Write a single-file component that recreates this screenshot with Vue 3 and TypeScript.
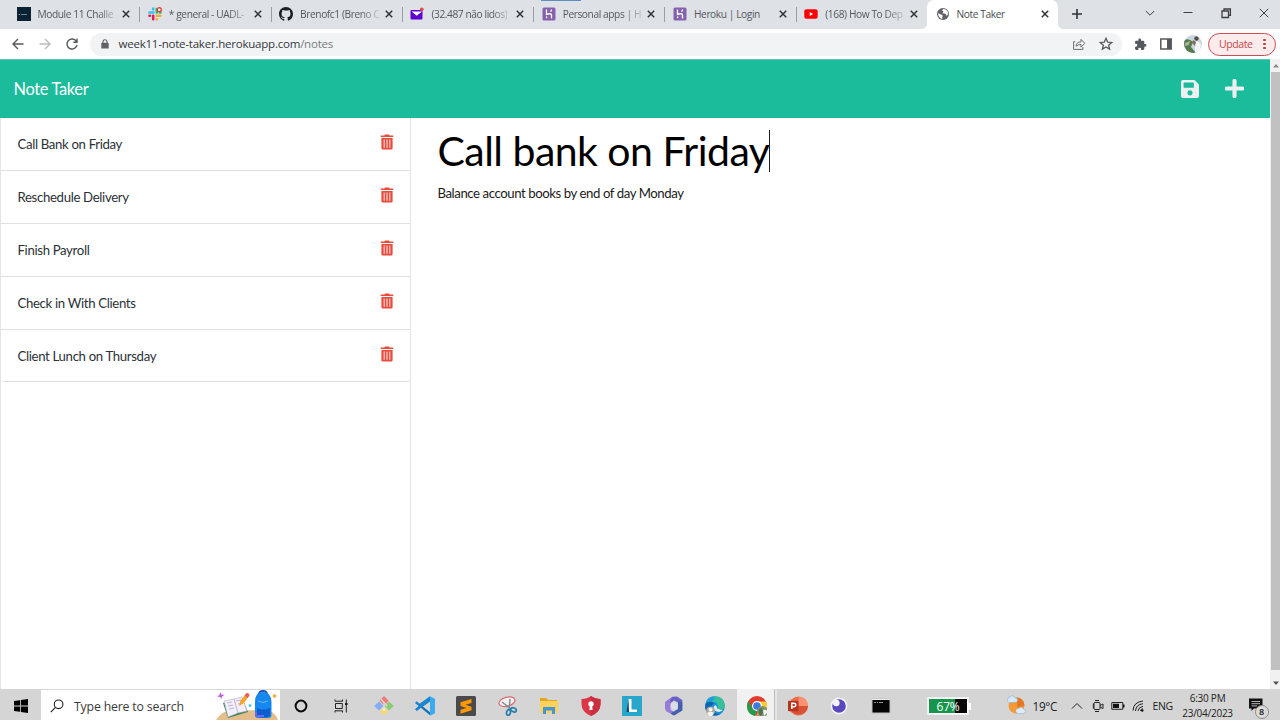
<script setup lang="ts">
import { ref } from 'vue'

interface Tab { icon: string; title: string }

const tabs: Tab[] = [
  { icon: 'module', title: 'Module 11 Challe' },
  { icon: 'slack', title: '* general - UADL-' },
  { icon: 'github', title: 'Brenofc1 (Breno C' },
  { icon: 'mail', title: '(32.487 não lidos)' },
  { icon: 'heroku', title: 'Personal apps | H' },
  { icon: 'heroku', title: 'Heroku | Login' },
  { icon: 'youtube', title: '(168) How To Dep' },
  { icon: 'globe', title: 'Note Taker' },
]
const activeTab = ref(7)

const notes = ref<string[]>([
  'Call Bank on Friday',
  'Reschedule Delivery',
  'Finish Payroll',
  'Check in With Clients',
  'Client Lunch on Thursday',
])
const noteTitle = ref('Call bank on Friday')
const noteText = ref('Balance account books by end of day Monday')

const apps: string[] = ['cortana', 'taskview', 'git', 'vscode', 'sublime', 'snip', 'folder', 'shield', 'lapp', 'office', 'edge', 'chrome', 'ppt', 'insomnia', 'cmd']
</script>

<template>
  <div class="screen">
    <div class="tabstrip">
      <span class="strip-mark"></span>
      <div v-for="(tab, i) in tabs" :key="i" class="tab" :class="{ active: i === activeTab, nosep: i === 6, full: i === 5 || i === 7 }">
        <svg class="fav" viewBox="0 0 14 14">
          <g v-if="tab.icon === 'module'"><rect width="14" height="14" fill="#0b2233" /><path d="M1.500 7.500h1.500M4 7.500h6" stroke="#6d8796" stroke-width="1.200" /></g>
          <g v-else-if="tab.icon === 'slack'" stroke-width="2.6" stroke-linecap="round" fill="none">
            <path d="M1.5 5.5h4M5.2 1.5v1" stroke="#36c5f0" /><path d="M8.8 2v3.5M12 5.5h.5" stroke="#2eb67d" />
            <path d="M5.2 8.8v3.5M1.5 8.8h.5" stroke="#e01e5a" /><path d="M8.8 8.8h3.5M8.8 12.3v.2" stroke="#ecb22e" />
            <circle cx="11.3" cy="2.7" r="2" fill="#fff" stroke="#e0433b" stroke-width="1.4" />
          </g>
          <path v-else-if="tab.icon === 'github'" fill="#1b1f23" transform="scale(.875)" d="M8 0C3.58 0 0 3.58 0 8c0 3.54 2.29 6.53 5.47 7.59.4.07.55-.17.55-.38v-1.49c-2.01.37-2.53-.49-2.69-.94-.09-.23-.48-.94-.82-1.13-.28-.15-.68-.52-.01-.53.63-.01 1.08.58 1.23.82.72 1.21 1.87.87 2.33.66.07-.52.28-.87.51-1.07-1.78-.2-3.64-.89-3.64-3.95 0-.87.31-1.59.82-2.15-.08-.2-.36-1.02.08-2.12 0 0 .67-.21 2.2.82a7.6 7.6 0 0 1 4 0c1.53-1.04 2.2-.82 2.2-.82.44 1.1.16 1.92.08 2.12.51.56.82 1.27.82 2.15 0 3.07-1.87 3.75-3.65 3.95.29.25.54.73.54 1.48v2.19c0 .21.15.46.55.38A8 8 0 0 0 16 8c0-4.42-3.58-8-8-8Z" />
          <g v-else-if="tab.icon === 'mail'"><rect x=".5" y="3" width="12" height="9.5" rx="1" fill="#5f01d1" /><path d="M1.5 4.5h10.5L6.8 8.8Z" fill="#fff" /><circle cx="11.8" cy="2.2" r="1.8" fill="#e5483f" /></g>
          <g v-else-if="tab.icon === 'heroku'"><rect x=".5" y=".5" width="13" height="13" rx="1.5" fill="#8562ae" /><path d="M4.500 2.500v5c1.800-.9 5-1.300 5 .5v3.500M9.500 2.500q0 1.300-1 2.200" stroke="#fff" stroke-width="1.300" fill="none" /><path d="M4 9l1.700 1.300L4 11.600Z" fill="#fff" /></g>
          <g v-else-if="tab.icon === 'youtube'"><rect x=".3" y="2.3" width="13.4" height="9.4" rx="2" fill="#f00" /><path d="M5.7 5v4l3.5-2Z" fill="#fff" /></g>
          <g v-else><circle cx="7" cy="7" r="6" fill="#5f6368" /><path d="M7.5 1.8 6 3.5l1.5 1-1 1.8 3 .5 1.3 2.2 1.4-2.2Q12 3 7.500 1.800ZM2 6.200l3 1.300 2 1.200-.8 1.100.2 2.200Q2 11 2 6.200Z" fill="#fff" /></g>
        </svg>
        <span class="tab-title">{{ tab.title }}</span>
        <svg class="close" viewBox="0 0 8 8"><path d="m.8.8 6.4 6.4M7.2.8.8 7.2" stroke="#303236" stroke-width="1.5" /></svg>
      </div>
      <svg class="newtab" viewBox="0 0 12 12"><path d="M6 1v10M1 6h10" stroke="#303236" stroke-width="1.6" /></svg>
      <div class="winctl">
        <svg viewBox="0 0 12 12"><path d="m1.8 4 4.2 4.2L10.2 4" /></svg>
        <svg viewBox="0 0 12 12"><path d="M1.5 5.500h9" /></svg>
        <svg viewBox="0 0 12 12"><path d="M2 4h6.5v6.5H2ZM4 3.8V2h6.4v6.4H8.6" stroke-width="1.3" /></svg>
        <svg viewBox="0 0 12 12"><path d="m1.8 1.8 8.4 8.4M10.2 1.8l-8.4 8.4" /></svg>
      </div>
    </div>

    <div class="toolbar">
      <svg class="nav" viewBox="0 0 12 12"><path d="M11.5 6H1.3M6 1 1 6l5 5" stroke="#55595e" /></svg>
      <svg class="nav" viewBox="0 0 12 12"><path d="M.5 6h10.2M6 1l5 5-5 5" stroke="#b9bcc0" /></svg>
      <svg class="nav" viewBox="0 0 12 12"><path d="M10.3 3.4A5 5 0 1 0 11 6.8M11 .6v3.7H7.3" stroke="#55595e" /></svg>
      <div class="omnibox">
        <svg class="lock" viewBox="0 0 8 10"><rect x=".3" y="3.8" width="7.4" height="5.8" rx=".7" fill="#5f6368" /><path d="M2 4V2.7a2 2 0 0 1 4 0V4" fill="none" stroke="#5f6368" stroke-width="1.1" /></svg>
        <span class="url">week11-note-taker.herokuapp.com<em>/notes</em></span>
        <svg class="share" viewBox="0 0 14 14"><path d="M3.2 4.7H1.6v7.7h9.3V10M4 9.2q.4-4.2 5-4.4V2.4l3.8 3.9-3.8 3.8V7.5Q6 7.4 4 9.2Z" fill="none" stroke="#6a6e73" /></svg>
        <svg class="star" viewBox="0 0 14 14"><path d="m7 1.3 1.65 3.75 4.1.4-3.1 2.7.95 4L7 10l-3.6 2.15.95-4-3.1-2.7 4.1-.4Z" fill="none" stroke="#55595e" stroke-width="1.3" /></svg>
      </div>
      <svg class="tool puzzle" viewBox="0 0 24 24"><path fill="#55595e" d="M20.5 11H19V7a2 2 0 0 0-2-2h-4V3.500a2.500 2.500 0 0 0-5 0V5H4a2 2 0 0 0-2 2v3.800h1.500a2.700 2.700 0 0 1 0 5.400H2V20a2 2 0 0 0 2 2h3.800v-1.500a2.700 2.700 0 0 1 5.400 0V22H17a2 2 0 0 0 2-2v-4h1.500a2.500 2.500 0 0 0 0-5Z" /></svg>
      <svg class="tool panel" viewBox="0 0 12 12"><path d="M.8 1h10.4v10H.8Z" fill="none" stroke="#55595e" stroke-width="1.5" /><path d="M7 1h4v10H7Z" fill="#55595e" /></svg>
      <svg class="avatar" viewBox="0 0 18 18"><clipPath id="av"><circle cx="9" cy="9" r="9" /></clipPath><g clip-path="url(#av)"><path d="M0 0h18v18H0Z" fill="#c6d8df" /><path d="M0 5q5-2 9 2l-2 5 5 6H0Z" fill="#567a4d" /><path d="M1 8 6 6 5 10 1 11Z" fill="#a5b5a1" /><path d="M11 7q4-2 6 3l-2 8h-4Z" fill="#f4f4f4" /><circle cx="12.5" cy="3.500" r="2.200" fill="#594b43" /><path d="m9 5 3 2-1 4-3-3Z" fill="#856f61" /></g></svg>
      <div class="update"><span>Update</span><i></i></div>
    </div>

    <div class="viewport">
      <div class="page">
        <header class="navbar">
          <span class="brand">Note Taker</span>
          <svg class="save" viewBox="0 0 448 448"><path fill="#ecf0f1" fill-rule="evenodd" d="m434 98-84-84A48 48 0 0 0 316 0H48A48 48 0 0 0 0 48v352a48 48 0 0 0 48 48h352a48 48 0 0 0 48-48V132a48 48 0 0 0-14-34ZM224 384a64 64 0 1 1 0-128 64 64 0 0 1 0 128Zm96-308v104a12 12 0 0 1-12 12H76a12 12 0 0 1-12-12V76a12 12 0 0 1 12-12h232a12 12 0 0 1 12 12Z" /></svg>
          <svg class="add" viewBox="0 0 18 18"><path d="M9 1.700v14.600M1.700 9h14.600" stroke="#ecf0f1" stroke-width="3.900" stroke-linecap="round" /></svg>
        </header>
        <div class="content">
          <aside class="sidebar">
            <ul>
              <li v-for="note in notes" :key="note">
                <span>{{ note }}</span>
                <svg viewBox="0 0 14 16"><path fill="#e74c3c" d="M.7 1.500H4.300L5 .5h4l.7 1h3.600v1.500H.7ZM1.400 4h11.200v10.200q0 1.300-1.300 1.300H2.700q-1.300 0-1.300-1.300Z" /><path d="M4.200 5.600v8.200M7 5.600v8.200M9.800 5.600v8.200" stroke="#fbd9d5" stroke-width="1.100" /></svg>
              </li>
            </ul>
          </aside>
          <main class="editor">
            <div class="heading"><span>{{ noteTitle }}</span><i class="caret"></i></div>
            <p>{{ noteText }}</p>
          </main>
        </div>
      </div>
      <div class="scrollbar">
        <svg viewBox="0 0 10 12"><path d="m2 8 3-3.500L8 8Z" fill="#8b8b8b" /></svg>
        <div class="thumb"></div>
        <svg viewBox="0 0 10 12"><path d="m2 5 3 3.500L8 5Z" fill="#505050" /></svg>
      </div>
    </div>

    <footer class="taskbar">
      <div class="start"><svg viewBox="0 0 14 14"><path d="M0 2 6 1.200v5.400H0ZM6.800 1 14 0v6.600H6.800ZM0 7.400h6v5.400L0 12ZM6.800 7.400H14V14l-7.200-1Z" fill="#000" /></svg></div>
      <div class="search">
        <svg class="lens" viewBox="0 0 14 14"><circle cx="8.600" cy="5.300" r="4.300" fill="none" stroke="#222" stroke-width="1.100" /><path d="M5.500 8.400.8 13.200" stroke="#222" stroke-width="1.200" /></svg>
        <span>Type here to search</span>
        <svg class="art" viewBox="0 0 64 30">
          <path d="M0 30q7-11 18-9l24-1q16-2 20 10Z" fill="#e4bd8c" />
          <path d="m4 2 1.500 2.500L8.500 5 6 6.500 5.500 9 4 7 1 6.500 3.500 5Z" fill="#c45fe0" />
          <path d="m7 13 19-5 6 14-20 6Z" fill="#3b8b57" /><path d="m8 11 10-2 8-2 5 14-9 2-10 4Z" fill="#f3eef9" stroke="#a9a2bd" stroke-width=".5" /><path d="m18 9 4 14M11 13l5-1M12 16l5-1M13 19l5-1M20 11l5-1M22 14l5-1" stroke="#a69ebf" stroke-width=".7" />
          <path d="m23 16 1.300-5 5.500-7 3 2.500-5.500 7Z" fill="#f6a52c" /><path d="m28.500 5.500 2-2.500q3-.2 3 2.500l-2 2.500Z" fill="#e85e59" />
          <path d="M43 5q0-4 4-4t4 4" fill="none" stroke="#1753b5" stroke-width="2" /><path d="M39 12q0-10 8-10t8.500 10v13q0 3-3 3H42q-3 0-3-3Z" fill="#1687ee" /><path d="M41 18q6 3 13 0v8q-6 3-13 0Z" fill="#0e5dcc" /><path d="M40 22v4h8" stroke="#7069ed" stroke-width="2" fill="none" /><path d="M42 11q5 3 10 0" stroke="#65baff" fill="none" />
          <circle cx="58.500" cy="6" r="1.800" fill="#f7aa29" /><circle cx="34" cy="15.500" r="1.500" fill="#58c8dc" />
        </svg>
      </div>
      <div v-for="app in apps" :key="app" class="app" :class="{ current: app === 'chrome' }">
        <svg viewBox="0 0 20 20">
          <circle v-if="app === 'cortana'" cx="10" cy="10" r="5.400" fill="none" stroke="#0c0c0c" stroke-width="2" />
          <g v-else-if="app === 'taskview'" fill="none" stroke="#222"><path d="M3 3.500v1.700h7.500V3.500M3 16.500v-1.700h7.500v1.700M3.500 7.500h6.800v5H3.500ZM14.300 3.500v13" /><path d="M13 7h2.600v2H13Z" fill="#222" stroke="none" /></g>
          <g v-else-if="app === 'git'"><path d="m10 0 4.500 4.500-2 3-2.500 2L5.500 4.500Z" fill="#ef7c77" /><path d="M5 5.500 9.500 10 5 14.500.2 10Z" fill="#84aef7" /><path d="M15 5.500 19.800 10 15 14.500 10.500 10Z" fill="#8cca76" /><path d="m10 10.500 4.500 4.500L10 19.500 5.500 15Z" fill="#f7d774" /><path d="m7 3 6 7M10 6.500V14" stroke="#ddd" stroke-width="1.200" /><circle cx="10" cy="13.500" r="1.500" fill="#eee" /></g>
          <g v-else-if="app === 'vscode'"><path d="M1.500 5.500 15 16.200v3L.2 7Z" fill="#1472b9" /><path d="M.2 13 15 .8v4.500L1.500 15Z" fill="#188bd2" /><path d="M.2 7 1.700 5.500 4.500 7.700 15 .3v5.200L1.700 14.700.2 13.300 4 10Z" fill="#1a86cf" /><path d="M15 .3 20 2.800v14.400l-5 2.500Z" fill="#3aabee" /></g>
          <g v-else-if="app === 'sublime'"><rect width="20" height="20" rx="1.500" fill="#4a4a4a" /><path d="m4.500 6.300 11-3.300v4l-6 1.700 6 2v3.500l-11 3.500v-4l6-1.800-6-1.900Z" fill="#ff9800" /></g>
          <g v-else-if="app === 'snip'"><ellipse cx="9" cy="5.700" rx="8.200" ry="4.500" transform="rotate(-15 9 5.700)" fill="#f6f1f1" stroke="#db6670" stroke-width="1.200" /><path d="m4 6 9 7M12 3l-1 11" stroke="#818c94" stroke-width="1.500" /><g fill="none" stroke="#217eaf" stroke-width="1.700"><ellipse cx="10.500" cy="16.500" rx="1.900" ry="2.800" transform="rotate(15 10.500 16.500)" /><ellipse cx="15.500" cy="13.800" rx="2.900" ry="1.900" transform="rotate(25 15.500 13.800)" /></g></g>
          <g v-else-if="app === 'folder'"><path d="M1 2h6l2 2h9v4H1Z" fill="#e8a51b" /><path d="M1 5h18v12H1Z" fill="#ffd25e" /><path d="M4 18v-7h12v7h-3v-3.500H7V18Z" fill="#4596d1" /></g>
          <g v-else-if="app === 'shield'"><path d="M10 0q4 3 9.500 3v5q0 8-9.500 12Q.5 16 .5 8V3Q6 3 10 0Z" fill="#dc3545" /><path d="M10 0q4 3 9.500 3v5q0 8-9.500 12Z" fill="#c92f40" /><circle cx="10" cy="8" r="2.700" fill="#fff" /><path d="M9 9h2l.6 5H8.400Z" fill="#fff" /></g>
          <g v-else-if="app === 'lapp'"><path d="M0 0h20v20H0Z" fill="#28a6cc" /><path d="M6.500 3 4.500 16H8Z" fill="#15435e" /><path d="M6.500 3h3v10.500H15V16H7Z" fill="#fff" /></g>
          <g v-else-if="app === 'office'"><path d="M8.500.8 13 .5l5.300 3.500v7.500L14 10V6.500L10 4.500 6.500 7v6.500L4 15.200 1.300 13V6Z" fill="#6a60c8" /><path d="M1.300 6 8.500.8Q6 3.500 6 7.500v6l4 2.300 8.300-4.300v2.700L10 19.500 1.800 15Z" fill="#9a79dd" /><path d="m14 5.500 4.300 1v8L10 19.500l-3.500-2L14 13Z" fill="#4360ac" /><path d="m10 6.500 3.300 1.800v3.500L10 13.700l-3.300-1.900V8.300Z" fill="#dcdeec" /></g>
          <g v-else-if="app === 'edge'"><circle cx="10" cy="10" r="9.800" fill="#168fd4" /><path d="M.5 8Q3 0 11 .3q8 .8 8.800 8.700 0 5-5 5-3 0-2-3 .5-5-5-5Q3 6 .5 8Z" fill="#36bf9a" /><path d="M.5 8Q2 1 8 .6q4 2-1 5.400Q3 6 .5 8Z" fill="#209fd8" /><path d="M.5 8Q4 4 9 7q-4 3-2 7t8 4Q9 21 4 18-1 14 .5 8Z" fill="#0b63b3" /><path d="M10.500 9q2 1.500 1.500 3.500l6 2-4 1.500q-5-.5-5.500-4 0-2 2-3Z" fill="#dce9f4" /><circle cx="5.500" cy="15" r="4.500" fill="#aaa59e" /><circle cx="5.500" cy="13.500" r="2" fill="#f5f1ec" /><path d="M2 17q3-3 7 0l-2 3H4Z" fill="#f5f1ec" /></g>
          <g v-else-if="app === 'chrome'"><circle cx="10" cy="10" r="10" fill="#e33b2e" /><path d="M1.300 5 6 13l4 1.500L8 20Q0 18 0 10q0-3 1.300-5Z" fill="#259b4b" /><path d="M10 5.500h9q3 7-3 12l-7 2.500 5-9Z" fill="#ffcb30" /><circle cx="10" cy="10" r="5" fill="#fff" /><circle cx="10" cy="10" r="3.800" fill="#3779e5" /><circle cx="15.500" cy="15.500" r="5.500" fill="#7d9576" /><path d="m12 13 3-1 1 4-2 4q-3-2-2-7Z" fill="#55704d" /><path d="M16 14q5-1 4 3l-3 3Z" fill="#f1f4f1" /></g>
          <g v-else-if="app === 'ppt'"><circle cx="10.500" cy="10" r="9.500" fill="#ed6c47" /><path d="M10.500.5A9.500 9.500 0 0 1 20 10h-9.500Z" fill="#ff9274" /><path d="M2 10h18a9.500 9.500 0 0 1-18 3Z" fill="#d75336" /><rect x="0" y="4.800" width="10.500" height="10.500" rx="1" fill="#b7331c" /><path d="M3.800 13V7.300h2q2 0 2 1.700t-2 1.700h-2" fill="none" stroke="#fff" stroke-width="1.500" /></g>
          <g v-else-if="app === 'insomnia'"><circle cx="10" cy="10" r="7.600" fill="#5849be" stroke="#f5f2fa" stroke-width="1.600" /><circle cx="7.300" cy="7" r="3.300" fill="#f5f2fa" /></g>
          <g v-else><path d="M1 3h18v14H1Z" fill="#050505" stroke="#bebebe" /><path d="M1 3.500h18" stroke="#eee" stroke-width="1" /><path d="M3 6.500h2M6 6.500h1M8 6.500h4" stroke="#999" /></g>
        </svg>
      </div>
      <div class="battery"><span>67%</span></div>
      <svg class="weather" viewBox="0 0 20 20"><circle cx="10.500" cy="10.500" r="8" fill="#f49a35" /><path d="M10.500 2.500a8 8 0 0 1 8 8l-7 2Z" fill="#e67721" /><path d="M3 7.500a3 3 0 0 1 1-5.500q3-3 5 .8 3 0 2.500 3-.5 1.700-2.500 1.700Z" fill="#d7eafb" stroke="#7eacd6" stroke-width=".6" /><path d="M12 18.500a2.500 2.500 0 0 1 .5-5q3-3 5 .6 2.500.4 2 2.700-.5 1.700-2.500 1.700Z" fill="#dfebfb" stroke="#7eacd6" stroke-width=".5" /></svg>
      <span class="temp">19°C</span>
      <svg class="tray chev" viewBox="0 0 14 14"><path d="M2 9.500 7 4.500l5 5" /></svg>
      <svg class="tray cam" viewBox="0 0 14 14"><rect x="3" y="3.500" width="6" height="7" rx="1" /><path d="M9 6.500 12 5v4.500L9 8M4 1.500h4M4 12.500h4M2.300 4.500v5" /></svg>
      <svg class="tray bat" viewBox="0 0 14 14"><path d="M.8 3.500h11v6.800H.8Z" /><path d="M2 4.800h6V9H2ZM12 5.500h1.500v3H12Z" fill="#111" stroke="none" /></svg>
      <svg class="tray wifi" viewBox="0 0 14 14"><path d="M2 11.500Q2.500 3 12 2M4.500 12Q5 5.500 12 4.700M7 12q.5-4 5-4.700M9.300 12q.5-2 2.700-2.300" /><circle cx="11.300" cy="11.500" r="1.200" fill="#111" stroke="none" /></svg>
      <span class="lang">ENG</span>
      <div class="clock"><span>6:30 PM</span><span>23/04/2023</span></div>
      <div class="notif"><svg viewBox="0 0 14 14"><path d="M0 .5h13.500v10H5L2.500 13v-2.500H0Z" fill="#111" /><path d="M2.500 3.500H11M2.500 5.700H11M2.500 7.900H8" stroke="#ddd" stroke-width=".8" /></svg><b>8</b></div>
    </footer>
  </div>
</template>

<style>
body { margin: 0; overflow: hidden; }
</style>

<style scoped>
.screen { width: 1280px; height: 720px; display: flex; flex-direction: column; overflow: hidden; background: #fff; font-family: "Open Sans", "Noto Sans", sans-serif; color: #222; }
.screen svg { display: block; flex: none; }
.tabstrip { height: 29px; flex: none; display: flex; background: #dee1e6; padding-left: 8px; position: relative; }
.strip-mark { position: absolute; left: 541px; top: 0; width: 40px; height: 1px; background: #5b8fc4; }
.tab { width: 131.300px; flex: none; box-sizing: border-box; padding: 0 9px 1px 8.500px; display: flex; align-items: center; position: relative; }
.tab::after { content: ""; position: absolute; right: -1px; top: 7px; width: 1px; height: 15px; background: #9a9da2; }
.tab.nosep::after, .tab.active::after { display: none; }
.tab.active { background: #fff; border-radius: 7px 7px 0 0; }
.tab.active::before { content: ""; position: absolute; left: -6px; right: -6px; bottom: 0; height: 6px; background: radial-gradient(circle at 0 0, transparent 6px, #fff 6.500px) left / 6px 6px no-repeat, radial-gradient(circle at 100% 0, transparent 6px, #fff 6.500px) right / 6px 6px no-repeat; }
.fav { width: 14px; height: 14px; }
.tab-title { flex: none; margin-left: 7px; font-size: 10.200px; letter-spacing: -.42px; line-height: 16px; white-space: pre; color: #55585d; -webkit-mask-image: linear-gradient(90deg, #000 60px, rgba(0, 0, 0, .15) 80px); mask-image: linear-gradient(90deg, #000 60px, rgba(0, 0, 0, .15) 80px); }
.tab.full .tab-title { -webkit-mask-image: none; mask-image: none; }
.tab.active .tab-title { color: #4a4d51; }
.close { width: 8px; height: 8px; margin-left: auto; }
.newtab { width: 12px; height: 12px; margin: 8px 0 0 12.500px; }
.winctl { margin-left: auto; display: flex; gap: 26px; padding: 6.500px 10.500px 0 0; }
.winctl svg { width: 12px; height: 12px; fill: none; stroke: #3c3e42; stroke-width: 1; }

.toolbar { height: 30px; flex: none; display: flex; align-items: center; padding: 0 4px 0 12px; box-sizing: border-box; background: #fff; }
.nav { width: 12px; height: 12px; margin-right: 15px; fill: none; stroke-width: 1.400; }
.omnibox { width: 1032px; height: 23px; margin-left: -3px; border-radius: 12px; background: #f1f3f4; display: flex; align-items: center; box-sizing: border-box; padding: 0 9px 0 11px; flex: none; }
.lock { width: 8px; height: 10px; }
.url { margin: -1px 0 0 9.500px; font-size: 11.500px; letter-spacing: -.22px; color: #35383c; }
.url em { font-style: normal; color: #777b80; }
.share { width: 14px; height: 14px; margin-left: auto; }
.star { width: 14px; height: 14px; margin-left: 13px; }
.puzzle { width: 13px; height: 13px; margin-left: 11.500px; }
.panel { width: 12px; height: 12px; margin-left: 13px; }
.avatar { width: 18px; height: 18px; margin-left: 12px; }
.update { width: 68px; height: 23px; margin-left: auto; box-sizing: border-box; border: 1px solid #cf4b51; border-radius: 12px; background: #fcecec; color: #c8474b; font-size: 10.500px; line-height: 20px; display: flex; align-items: center; justify-content: space-between; padding: 0 9.500px 0 10px; }
.update span { letter-spacing: -.4px; margin-top: -1px; }
.update i { width: 2.200px; height: 2.200px; border-radius: 2px; background: #c5353b; box-shadow: 0 -4px #c5353b, 0 4px #c5353b; }

.viewport { height: 630px; flex: none; display: flex; }
.page { width: 1269.500px; flex: none; font-family: Lato, sans-serif; display: flex; flex-direction: column; }
.navbar { height: 59px; flex: none; box-sizing: border-box; border-top: 1px solid #63c3b3; background: #1abc9c; display: flex; align-items: center; padding: 0 25.500px 1px 13.500px; }
.brand { color: #fff; font-size: 16.400px; letter-spacing: -.32px; line-height: 24px; flex: 1; padding-top: 1px; }
.save { width: 18px; height: 18px; }
.add { width: 19px; height: 19px; margin-left: 26.500px; }
.content { flex: 1; display: flex; }
.sidebar { width: 410.500px; box-sizing: border-box; border: 1px solid #e3e4e5; border-width: 0 1px; flex: none; }
.sidebar ul { list-style: none; margin: 0; padding: 0; }
.sidebar li { height: 52.900px; box-sizing: border-box; border-bottom: 1px solid #dfe0e1; display: flex; align-items: center; justify-content: space-between; padding: 0 16px 0 16.500px; font-size: 13.200px; letter-spacing: -.34px; color: #2c3136; }
.sidebar li span { padding-top: 1px; }
.sidebar li:last-child { border-radius: 0 0 3px 3px; }
.sidebar li svg { width: 14px; height: 16px; margin-top: -3px; }
.editor { padding: 9px 0 0 27px; color: #1a1a1a; }
.heading { height: 48px; display: flex; align-items: center; font-size: 41px; letter-spacing: -.53px; line-height: 48px; color: #000; white-space: nowrap; }
.caret { width: 1px; height: 42px; background: #222; }
.editor p { margin: 8px 0 0; font-size: 13.200px; letter-spacing: -.43px; line-height: 20px; }
.scrollbar { width: 10px; margin-left: auto; background: #f1f1f1; display: flex; flex-direction: column; align-items: center; }
.scrollbar svg { width: 10px; height: 13px; margin-left: 2px; }
.thumb { width: 9px; margin-left: 1px; height: 598px; background: #c1c1c1; }
.scrollbar svg:last-child { margin-top: auto; }

.taskbar { height: 31px; flex: none; display: flex; align-items: center; background: #d5d5d5; position: relative; }
.start { width: 41px; display: flex; justify-content: center; padding-top: 2px; box-sizing: border-box; flex: none; }
.start svg { width: 14px; height: 14px; }
.search { width: 239px; height: 30px; align-self: flex-end; background: #fff; display: flex; align-items: center; flex: none; box-sizing: border-box; padding-left: 9px; padding-top: 2px; color: #3b3b3b; font-size: 12.300px; white-space: nowrap; }
.search span { margin-left: 10px; letter-spacing: -.18px; }
.lens { width: 14px; height: 14px; }
.art { width: 64px; height: 30px; margin: -2px 0 0 auto; }
.app { width: 41.450px; height: 31px; flex: none; display: flex; align-items: center; justify-content: center; box-sizing: border-box; padding-top: 3px; }
.app svg { width: 20px; height: 20px; }
.app.current { background: linear-gradient(90deg, transparent 1px, #f1f1f1 1px, #f1f1f1 38px, #bcbcbc 38px, #bcbcbc 39px, #e5e5e5 39px); }
.battery { width: 38px; height: 14px; margin: 3px 0 0 26.500px; border: 1px solid #fff; outline: 1px solid #eee; box-sizing: content-box; background: linear-gradient(90deg, #15964a 68%, #080808 68%); position: relative; flex: none; display: flex; align-items: center; justify-content: center; color: #fff; font-size: 12px; letter-spacing: -.2px; }
.battery::after { content: ""; position: absolute; right: -4px; top: 4px; width: 3px; height: 7px; background: #fff; }
.weather { width: 20px; height: 20px; margin: 0 0 0 37.500px; }
.temp { margin: 3px 0 0 7px; width: 25px; font-size: 11.700px; letter-spacing: -.3px; flex: none; white-space: nowrap; }
.tray { width: 14px; height: 14px; margin-top: 2px; fill: none; stroke: #222; stroke-width: 1; }
.chev { margin-left: 12px; }
.cam { margin-left: 7px; }
.bat { margin-left: 6px; }
.wifi { margin-left: 6px; }
.lang { width: 21px; margin: 2px 0 0 8px; font-size: 10.500px; letter-spacing: -.4px; flex: none; }
.clock { width: 60px; padding-top: 3px; margin-left: 4px; display: flex; flex-direction: column; align-items: center; font-size: 10px; line-height: 15px; letter-spacing: -.25px; flex: none; white-space: nowrap; }
.notif { margin: 1px 0 0 11px; position: relative; }
.notif svg { width: 14px; height: 14px; }
.notif b { position: absolute; left: 6px; top: 7px; width: 12px; height: 12px; border: 1px solid #8c8c8c; border-radius: 50%; background: #dcdcdc; font-size: 9px; line-height: 12px; text-align: center; font-weight: 600; color: #111; }
</style>
